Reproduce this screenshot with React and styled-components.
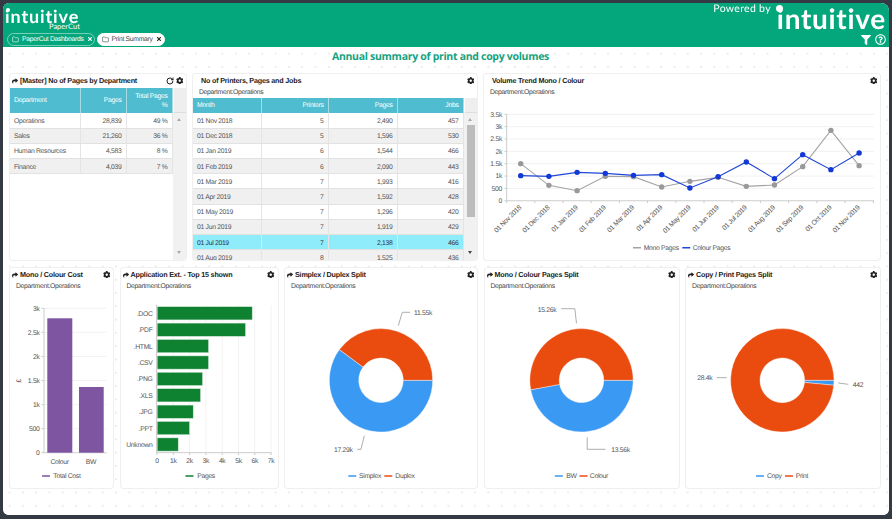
import React from 'react'
import styled, { createGlobalStyle } from 'styled-components'
import { FaCog, FaShare, FaTimes, FaFilter, FaRegQuestionCircle } from 'react-icons/fa'
import { Folder, RotateCw } from 'lucide-react'

const Global = createGlobalStyle`
  html, body { margin: 0; padding: 0; background: #343a44; }
  body {
    font-family: "Liberation Sans", Arial, sans-serif;
    width: 892px;
    height: 519px;
    overflow: hidden;
    text-rendering: geometricPrecision;
  }
  * { box-sizing: border-box; }
`

const Window = styled.div`
  margin: 3px 0 0 3px;
  width: 886px;
  height: 512px;
  background: #fff;
  border-radius: 6px 8px 6px 6px;
  overflow: hidden;
  display: flex;
  flex-direction: column;
  filter: blur(0.3px);
`
const Header = styled.header`
  height: 44px;
  flex: none;
  background: #04a67c;
  display: flex;
  justify-content: space-between;
  color: #fff;
`
const HeaderLeft = styled.div`
  padding: 5px 0 0 4px;
`
const Brand = styled.div`
  position: relative;
  font-family: Lato, sans-serif;
  font-weight: 700;
  white-space: nowrap;
  font-size: ${p => p.$size}px;
  line-height: ${p => p.$line}px;
  letter-spacing: ${p => p.$track}px;
  margin-left: ${p => p.$shift}px;
  color: #fff;
  &::before {
    content: '';
    position: absolute;
    left: ${p => p.$dotX}px;
    top: ${p => p.$dotY}px;
    width: ${p => p.$dot}px;
    height: ${p => p.$dot}px;
    border-radius: 50%;
    background: #fff;
  }
`
const Product = styled.div`
  font-family: Lato, sans-serif;
  font-size: 7.5px;
  line-height: 6px;
  padding-left: 42px;
`
const Tabs = styled.div`
  display: flex;
  gap: 1.5px;
  margin-top: 2.5px;
`
const Tab = styled.div`
  height: 13px;
  width: ${p => p.$w}px;
  border-radius: 7px;
  border: 1px solid ${p => (p.$active ? '#fff' : 'rgba(255,255,255,0.45)')};
  background: ${p => (p.$active ? '#fff' : 'transparent')};
  color: ${p => (p.$active ? '#444' : '#fff')};
  font-size: 6.8px;
  letter-spacing: -0.3px;
  display: flex;
  align-items: center;
  gap: 3px;
  padding-left: 4px;
  white-space: nowrap;
`
const HeaderRight = styled.div`
  width: 180px;
  padding-right: 3px;
`
const BrandRow = styled.div`
  display: flex;
  justify-content: flex-end;
  gap: 6px;
`
const Powered = styled.div`
  font-family: Lato, sans-serif;
  font-size: 10.5px;
  line-height: 12px;
  letter-spacing: 0.3px;
  white-space: nowrap;
`
const HeaderIcons = styled.div`
  display: flex;
  justify-content: flex-end;
  align-items: center;
  gap: 4px;
  height: 13px;
`
const Main = styled.main`
  flex: 1;
  padding: 0 9px 0 7px;
  background-color: #fff;
  background-image: radial-gradient(circle, #ececec 0.8px, transparent 1px);
  background-size: 13.3px 13.3px;
`
const Title = styled.h1`
  margin: 0;
  padding: 3px 9px 9px 0;
  font-family: "Open Sans", sans-serif;
  font-size: 10.5px;
  letter-spacing: -0.3px;
  line-height: 15px;
  font-weight: 700;
  text-align: center;
  color: #14a27f;
`
const Row = styled.div`
  display: flex;
  justify-content: space-between;
  height: ${p => p.$h}px;
  margin-bottom: 8px;
`
const Panel = styled.section`
  width: ${p => p.$w}px;
  height: 100%;
  background: #fff;
  border-radius: 3px;
  box-shadow: 0 0 0 1px #efefef;
  overflow: hidden;
  display: flex;
  flex-direction: column;
`
const PanelHead = styled.div`
  height: 14px;
  flex: none;
  padding: 0 3px 1px ${p => (p.$plain ? 8 : 2)}px;
  display: flex;
  align-items: center;
  gap: 2px;
  font-size: 7.2px;
  letter-spacing: -0.2px;
  font-weight: 700;
  color: #222;
  white-space: nowrap;
`
const PanelName = styled.span`
  flex: 1;
`
const Sub = styled.div`
  height: 10px;
  flex: none;
  padding-left: 6px;
  font-size: 6.8px;
  letter-spacing: -0.3px;
  line-height: 9px;
  color: #444;
`
const GridArea = styled.div`
  flex: 1;
  min-height: 0;
  overflow: hidden;
  display: flex;
  align-items: flex-start;
`
const Table = styled.table`
  flex: none;
  width: ${p => p.$w}px;
  table-layout: fixed;
  border-collapse: collapse;
  font-size: 6.8px;
  letter-spacing: -0.3px;
  color: #555;
`
const Th = styled.th`
  height: ${p => p.$h}px;
  padding: 0 4px;
  background: #4fbdcf;
  border-right: 1px solid #a5dde6;
  color: #fff;
  font-weight: 400;
  line-height: 9px;
  text-align: ${p => (p.$left ? 'left' : 'right')};
`
const Td = styled.td`
  height: 15.2px;
  padding: 2px 4px 0;
  border-right: 1px solid #e4e4e4;
  border-bottom: 1px solid #e2e2e2;
  text-align: ${p => (p.$left ? 'left' : 'right')};
`
const Tr = styled.tr`
  background: ${p => (p.$hit ? '#8fecfb' : p.$odd ? '#f0f0f0' : '#fff')};
  color: ${p => (p.$hit ? '#333' : '#555')};
`
const Scroll = styled.div`
  flex: 1;
  align-self: stretch;
  background: #f1f1f1;
  position: relative;
  min-width: 0;
`
const ScrollCap = styled.div`
  height: ${p => p.$h}px;
  background: #eee;
  border-left: 1px solid #fff;
  border-bottom: 1px solid #ddd;
`
const Arrow = styled.div`
  position: absolute;
  left: 4px;
  width: 0;
  height: 0;
  border-left: 2.5px solid transparent;
  border-right: 2.5px solid transparent;
  ${p => (p.$down
    ? `bottom: 6px; border-top: 3px solid ${p.$dark ? '#444' : '#aaa'};`
    : `top: ${p.$top}px; border-bottom: 3px solid #aaa;`)}
`
const Thumb = styled.div`
  position: absolute;
  left: 3px;
  right: 2px;
  top: 27px;
  height: 92px;
  background: #bcbcbc;
`
const ChartSvg = styled.svg`
  display: block;
  flex: 1;
  min-height: 0;
  width: 100%;
`
const Tick = styled.text`
  font-family: "Liberation Sans", Arial, sans-serif;
  font-size: 6.8px;
  letter-spacing: -0.3px;
  fill: #555;
`

const Gear = () => <FaCog size={7.5} color="#222" />
const ShareIcon = () => <FaShare size={6} color="#222" />

function PanelTop({ name, share = true, reload }) {
  return (
    <PanelHead $plain={!share}>
      {share && <ShareIcon />}
      <PanelName>{name}</PanelName>
      {reload && <RotateCw size={8} color="#222" strokeWidth={3} />}
      <Gear />
    </PanelHead>
  )
}

const Legend = ({ items, y }) => (
  <>
    {items.map(([x, tx, color, label]) => (
      <g key={label}>
        <line x1={x} x2={x + 8} y1={y} y2={y} stroke={color} strokeWidth="1.6" />
        <Tick x={tx} y={y + 2.4}>{label}</Tick>
      </g>
    ))}
  </>
)

// donut slice, angles are degrees anticlockwise from east
function slice(cx, cy, R, r, a0, a1) {
  const pt = (rad, a) => {
    const t = (a * Math.PI) / 180
    return `${(cx + rad * Math.cos(t)).toFixed(2)} ${(cy - rad * Math.sin(t)).toFixed(2)}`
  }
  const large = Math.abs(a1 - a0) > 180 ? 1 : 0
  return `M${pt(R, a0)} A${R} ${R} 0 ${large} 0 ${pt(R, a1)} L${pt(r, a1)} A${r} ${r} 0 ${large} 1 ${pt(r, a0)} Z`
}

const BLUE = '#3a99f2'
const ORANGE = '#ea4c10'

function Donut({ x, w, cx, blue, orange, labels, leaders, legend }) {
  return (
    <ChartSvg viewBox={`${x} 292 ${w} 196`}>
      <path d={slice(cx, 380.3, 51.7, 22.3, blue[0], blue[1])} fill={BLUE} stroke="#fff" strokeWidth=".4" />
      <path d={slice(cx, 380.3, 51.7, 22.3, orange[0], orange[1])} fill={ORANGE} stroke="#fff" strokeWidth=".4" />
      {leaders.map(d => <polyline key={d} points={d} fill="none" stroke="#999" strokeWidth=".8" />)}
      {labels.map(([tx, ty, t]) => <Tick key={t} x={tx} y={ty}>{t}</Tick>)}
      <Legend y={476} items={legend} />
    </ChartSvg>
  )
}

const trendY = ['3.5k', '3k', '2.5k', '2k', '1.5k', '1k', '500', '0']
const months = ['01 Nov 2018', '01 Dec 2018', '01 Jan 2019', '01 Feb 2019', '01 Mar 2019', '01 Apr 2019', '01 May 2019', '01 Jun 2019', '01 Jul 2019', '01 Aug 2019', '01 Sep 2019', '01 Oct 2019', '01 Nov 2019']
const monoY = [281, 346, 362, 319, 320, 351, 334, 322, 349, 345, 290, 181, 287].map(v => 70 + v / 3)
const colourY = [317, 319, 307, 310, 316, 314, 354, 320, 276, 326, 254, 299, 249].map(v => 70 + v / 3)
const px = i => 520.7 + i * 28.2

function TrendChart() {
  return (
    <ChartSvg viewBox="484 98 396 162">
      {trendY.map((t, i) => {
        const y = 114.3 + i * 12.35
        return (
          <g key={t}>
            <line x1="506.7" x2="874" y1={y} y2={y} stroke={i === 7 ? '#ccc' : '#f1f1f1'} />
            <line x1="504.5" x2="506.7" y1={y} y2={y} stroke="#ccc" />
            <Tick x="502" y={y + 2.4} textAnchor="end">{t}</Tick>
          </g>
        )
      })}
      <line x1="506.7" x2="506.7" y1="114" y2="200.7" stroke="#ccc" />
      {months.map((m, i) => (
        <g key={i}>
          <line x1={px(i) - 14.1} x2={px(i) - 14.1} y1="200.7" y2="203" stroke="#ccc" />
          <Tick x={px(i) + 1} y={208} textAnchor="end" transform={`rotate(-45 ${px(i) + 1} 208)`}>{m}</Tick>
        </g>
      ))}
      <line x1="873.5" x2="873.5" y1="200.7" y2="203" stroke="#ccc" />
      <polyline points={monoY.map((y, i) => `${px(i)},${y}`).join(' ')} fill="none" stroke="#a3a3a3" strokeWidth="1.1" />
      {monoY.map((y, i) => <circle key={i} cx={px(i)} cy={y} r="2.7" fill="#999" />)}
      <polyline points={colourY.map((y, i) => `${px(i)},${y}`).join(' ')} fill="none" stroke="#1f46d8" strokeWidth="1.1" />
      {colourY.map((y, i) => <circle key={i} cx={px(i)} cy={y} r="2.7" fill="#1238d6" />)}
      <Legend y={247.7} items={[[633, 643.7, '#a3a3a3', 'Mono Pages'], [682.3, 692.7, '#1f46d8', 'Colour Pages']]} />
    </ChartSvg>
  )
}

const costTicks = ['3k', '2.5k', '2k', '1.5k', '1k', '500', '0']

function CostChart() {
  return (
    <ChartSvg viewBox="10 292 103 196">
      {costTicks.map((t, i) => {
        const y = 308.3 + i * 24.07
        return (
          <g key={t}>
            <line x1="44" x2="106.7" y1={y} y2={y} stroke={i === 6 ? '#ccc' : '#f3f3f3'} />
            <line x1="41.5" x2="44" y1={y} y2={y} stroke="#ccc" />
            <Tick x="39.5" y={y + 2.4} textAnchor="end">{t}</Tick>
          </g>
        )
      })}
      <line x1="44" x2="44" y1="308" y2="452.7" stroke="#ccc" />
      <rect x="47.3" y="318.3" width="25" height="134.4" fill="#7e55a0" />
      <rect x="79" y="387" width="24.7" height="65.7" fill="#7e55a0" />
      <Tick x="21" y="381" textAnchor="middle" transform="rotate(-90 21 381)">£</Tick>
      <Tick x="59.5" y="464" textAnchor="middle">Colour</Tick>
      <Tick x="91" y="464" textAnchor="middle">BW</Tick>
      <Legend y={476} items={[[42, 53.3, '#7e55a0', 'Total Cost']]} />
    </ChartSvg>
  )
}

const extBars = [['.DOC', 251.7], ['.PDF', 245], ['.HTML', 208], ['.CSV', 208], ['.PNG', 202], ['.XLS', 200], ['.JPG', 192.7], ['.PPT', 189], ['Unknown', 177.7]]

function ExtChart() {
  return (
    <ChartSvg viewBox="120.5 292 157 196">
      {['0', '1k', '2k', '3k', '4k', '5k', '6k', '7k'].map((t, i) => {
        const x = 156.5 + i * 16.3
        return (
          <g key={t}>
            <line x1={x} x2={x} y1="305" y2="452.7" stroke="#f3f3f3" />
            <line x1={x} x2={x} y1="452.7" y2="455" stroke="#ccc" />
            <Tick x={x} y="463.4" textAnchor="middle">{t}</Tick>
          </g>
        )
      })}
      <line x1="156" x2="156" y1="305" y2="452.7" stroke="#ccc" />
      <line x1="156" x2="271" y1="452.7" y2="452.7" stroke="#ccc" />
      {extBars.map(([t, end], i) => {
        const y = 306.7 + i * 16.4
        return (
          <g key={t}>
            <rect x="156.7" y={y} width={end - 156.7} height="13.2" fill="#0f8232" stroke="#cfe5d6" strokeWidth=".5" />
            <Tick x="152" y={y + 9} textAnchor="end">{t}</Tick>
          </g>
        )
      })}
      <Legend y={476} items={[[185, 196.7, '#0f8232', 'Pages']]} />
    </ChartSvg>
  )
}

const dept = [['Operations', '28,839', '49 %'], ['Sales', '21,260', '36 %'], ['Human Resources', '4,583', '8 %'], ['Finance', '4,039', '7 %']]
const volumes = [
  ['01 Nov 2018', 5, '2,490', 457], ['01 Dec 2018', 5, '1,596', 530], ['01 Jan 2019', 6, '1,544', 466],
  ['01 Feb 2019', 6, '2,090', 443], ['01 Mar 2019', 7, '1,993', 416], ['01 Apr 2019', 7, '1,592', 428],
  ['01 May 2019', 7, '1,296', 420], ['01 Jun 2019', 7, '1,919', 429], ['01 Jul 2019', 7, '2,138', 466],
  ['01 Aug 2019', 8, '1,525', 436],
]

export default function App() {
  return (
    <>
      <Global />
      <Window>
        <Header>
          <HeaderLeft>
            <Brand $size={18} $line={16} $track={0.9} $dot={4} $dotX={0.5} $dotY={0} $shift={-2}>intuitive</Brand>
            <Product>PaperCut</Product>
            <Tabs>
              <Tab $w={88}>
                <Folder size={7} /> PaperCut Dashboards <FaTimes size={6} />
              </Tab>
              <Tab $w={68} $active>
                <Folder size={7} /> Print Summary <FaTimes size={6} color="#222" />
              </Tab>
            </Tabs>
          </HeaderLeft>
          <HeaderRight>
            <BrandRow>
              <Powered>Powered by</Powered>
              <Brand $size={28} $line={30} $track={0.7} $dot={7} $dotX={-0.5} $dotY={1.5} $shift={0}>intuitive</Brand>
            </BrandRow>
            <HeaderIcons>
              <FaFilter size={10} />
              <FaRegQuestionCircle size={11} />
            </HeaderIcons>
          </HeaderRight>
        </Header>
        <Main>
          <Title>Annual summary of print and copy volumes</Title>
          <Row $h={186}>
            <Panel $w={176}>
              <PanelTop name="[Master] No of Pages by Department" reload />
              <GridArea>
                <Table $w={162}>
                  <colgroup><col width="70" /><col width="46" /><col width="46" /></colgroup>
                  <thead>
                    <tr>
                      <Th $h={25} $left>Department</Th><Th $h={25}>Pages</Th><Th $h={25}>Total Pages<br />%</Th>
                    </tr>
                  </thead>
                  <tbody>
                    {dept.map((r, i) => (
                      <Tr key={r[0]} $odd={i % 2 === 1}>
                        <Td $left>{r[0]}</Td><Td>{r[1]}</Td><Td>{r[2]}</Td>
                      </Tr>
                    ))}
                  </tbody>
                </Table>
                <Scroll>
                  <ScrollCap $h={25} />
                  <Arrow $top={30} />
                  <Arrow $down />
                </Scroll>
              </GridArea>
            </Panel>
            <Panel $w={284}>
              <PanelTop name="No of Printers, Pages and Jobs" share={false} />
              <Sub>Department:Operations</Sub>
              <GridArea>
                <Table $w={270}>
                  <colgroup><col width="68" /><col width="67" /><col width="69" /><col width="66" /></colgroup>
                  <thead>
                    <tr>
                      <Th $h={15} $left>Month</Th><Th $h={15}>Printers</Th><Th $h={15}>Pages</Th><Th $h={15}>Jobs</Th>
                    </tr>
                  </thead>
                  <tbody>
                    {volumes.map((r, i) => (
                      <Tr key={r[0]} $odd={i % 2 === 1} $hit={i === 8}>
                        <Td $left>{r[0]}</Td><Td>{r[1]}</Td><Td>{r[2]}</Td><Td>{r[3]}</Td>
                      </Tr>
                    ))}
                  </tbody>
                </Table>
                <Scroll>
                  <ScrollCap $h={15} />
                  <Arrow $top={20} />
                  <Thumb />
                  <Arrow $down $dark />
                </Scroll>
              </GridArea>
            </Panel>
            <Panel $w={396}>
              <PanelTop name="Volume Trend Mono / Colour" share={false} />
              <Sub>Department:Operations</Sub>
              <TrendChart />
            </Panel>
          </Row>
          <Row $h={220}>
            <Panel $w={103}>
              <PanelTop name="Mono / Colour Cost" />
              <Sub>Department:Operations</Sub>
              <CostChart />
            </Panel>
            <Panel $w={157}>
              <PanelTop name="Application Ext. - Top 15 shown" />
              <Sub>Department:Operations</Sub>
              <ExtChart />
            </Panel>
            <Panel $w={192}>
              <PanelTop name="Simplex / Duplex Split" />
              <Sub>Department:Operations</Sub>
              <Donut
                x={285} w={192} cx={381}
                blue={[143.6, 360]} orange={[0, 143.6]}
                leaders={['398.3,325.7 402.3,312.3 410,312.3', '364.3,435.7 361,449.3 357.3,449.3']}
                labels={[[414, 314.7, '11.55k'], [334, 451.7, '17.29k']]}
                legend={[[348.3, 359, BLUE, 'Simplex'], [384.3, 395.3, ORANGE, 'Duplex']]}
              />
            </Panel>
            <Panel $w={194}>
              <PanelTop name="Mono / Colour Pages Split" />
              <Sub>Department:Operations</Sub>
              <Donut
                x={484.5} w={194} cx={581}
                blue={[190.6, 360]} orange={[0, 190.6]}
                leaders={['560.7,308.7 574.3,308.7 576,323.3', '586.7,437.3 586.7,449.3 605,449.3']}
                labels={[[537.3, 311.7, '15.26k'], [610.7, 451.7, '13.56k']]}
                legend={[[554.3, 565.7, BLUE, 'BW'], [579, 589.3, ORANGE, 'Colour']]}
              />
            </Panel>
            <Panel $w={194}>
              <PanelTop name="Copy / Print Pages Split" />
              <Sub>Department:Operations</Sub>
              <Donut
                x={686} w={194} cx={782.3}
                blue={[-5.5, 0]} orange={[0, 354.5]}
                leaders={['716.7,377.7 726.7,377.7', '838.3,383 848.3,384.3']}
                labels={[[697.3, 380.2, '28.4k'], [852.7, 386.7, '442']]}
                legend={[[756, 767, BLUE, 'Copy'], [785, 795.7, ORANGE, 'Print']]}
              />
            </Panel>
          </Row>
        </Main>
      </Window>
    </>
  )
}
